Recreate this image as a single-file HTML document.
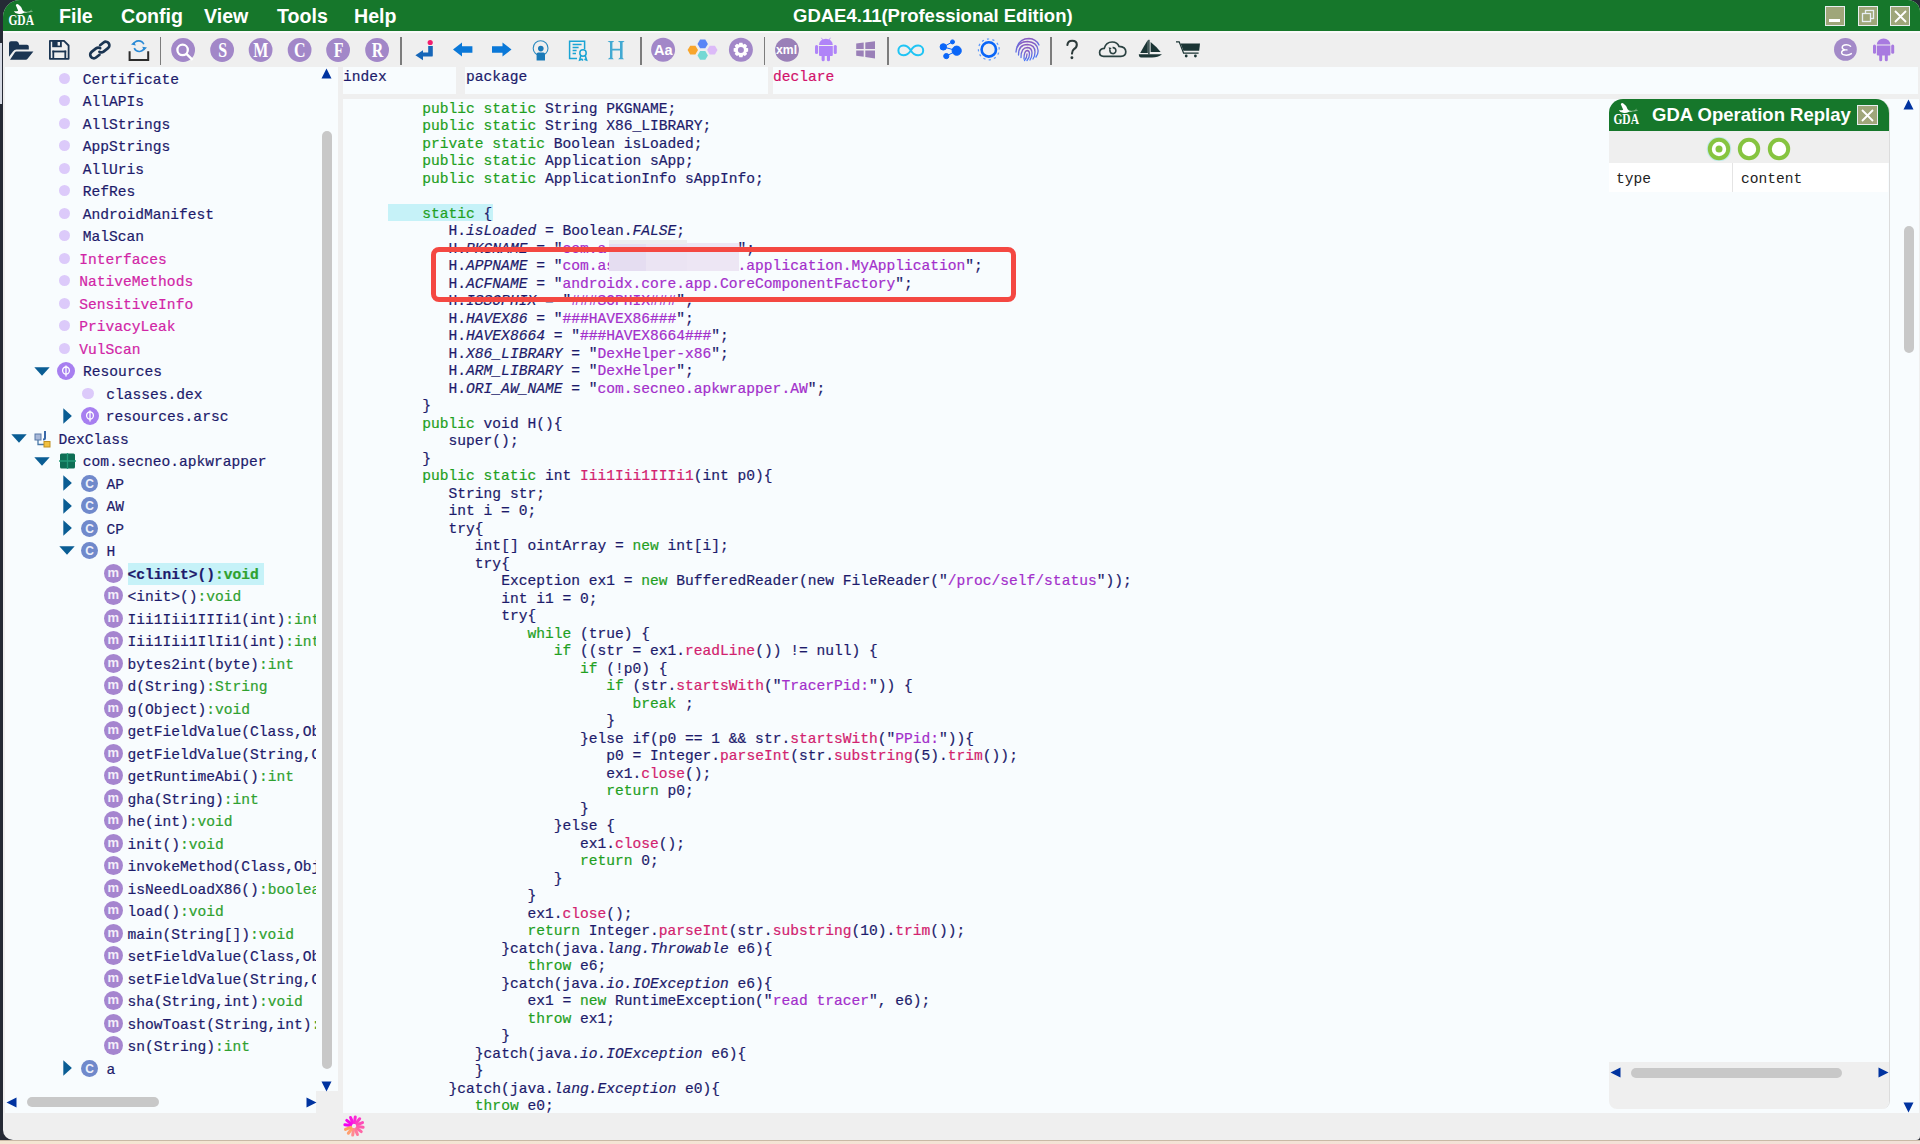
<!DOCTYPE html>
<html><head><meta charset="utf-8">
<style>
*{margin:0;padding:0;box-sizing:border-box}
html,body{width:1920px;height:1144px;overflow:hidden;background:#252a35}
body{position:relative;font-family:"Liberation Sans",sans-serif}
.abs{position:absolute}
.ic{position:absolute}
.circ{border-radius:50%;text-align:center;overflow:hidden}
.cl,.tl{position:absolute;white-space:pre;font-family:"Liberation Mono",monospace;font-size:14.6px;line-height:17.49px;color:#1d1b6b}
.tl{line-height:22.5px}
.cl,.tl{-webkit-text-stroke:0.2px currentColor}
.k{color:#1fa01f}.n{color:#1d1b6b}.m{color:#d2226e}.s{color:#a32fcb}.i{color:#1d1b6b;font-style:italic}
#win{position:absolute;left:3px;top:0;width:1917px;height:1140px;background:#efefef;border-radius:17px 12px 4px 10px;overflow:hidden}
#title{position:absolute;left:0;top:0;width:1917px;height:31px;background:#16772b}
.menu{position:absolute;top:0;height:31px;font:bold 18.5px/31px "Liberation Sans",sans-serif;color:#fff}
.m2{font-size:19.6px;line-height:31px;top:1.1px}
#wline{position:absolute;left:0;top:31px;width:1917px;height:2px;background:#fafafa}
.sep{position:absolute;top:36.5px;width:1.6px;height:28.3px;background:#7c7c7c}
.panel{position:absolute;background:#f8fcfe}
.tri{position:absolute}
.thumb{position:absolute;background:#c8c8c8;border-radius:6px}
</style></head><body>
<div id="win">
  <div id="title"></div>
  <div id="wline"></div>
</div>
<!-- left light strip -->
<div class="abs" style="left:0;top:43px;width:2px;height:61px;background:#d6dae4"></div>
<!-- bottom beige -->
<div class="abs" style="left:0;top:1140px;width:1920px;height:4px;background:linear-gradient(90deg,#f4e6d2,#f3e0d8);border-top:1px solid #c9b9a6"></div>

<!-- title bar contents -->
<svg class="abs" style="left:4px;top:0px" width="36" height="30" viewBox="0 0 36 30">
  <path d="M11.8 5.2 Q12.6 3.4 14.4 4.4 Q17.6 6.4 18.6 10.2 L20 11.6 L23.4 12.2 L19.6 13 Q17.4 14.4 14 13.8 Q11 13.2 9.8 11.2 Q12.6 11.6 14.2 10.8 Q13.2 8.4 11.8 5.2 Z" fill="#fff"/>
  <path d="M20 12.6 L28.6 11.4 M25.4 11.9 L27.6 10.2" stroke="#a8cca8" stroke-width="0.7" fill="none"/>
  <text x="4.4" y="24.6" font-family="Liberation Serif" font-weight="bold" font-size="14" fill="#fff" textLength="25.6" lengthAdjust="spacingAndGlyphs">GDA</text>
</svg>
<div class="menu m2" style="left:59px">File</div>
<div class="menu m2" style="left:121px">Config</div>
<div class="menu m2" style="left:204px">View</div>
<div class="menu m2" style="left:277px">Tools</div>
<div class="menu m2" style="left:354px">Help</div>
<div class="menu" style="left:793px">GDAE4.11(Professional Edition)</div>

<!-- window buttons -->
<div class="abs" style="left:1825px;top:6px;width:20px;height:20px;background:#9fa67a;border:1.5px solid #e8eef0"><div class="abs" style="left:3px;top:12px;width:11px;height:3px;background:#fff"></div></div>
<div class="abs" style="left:1858px;top:6px;width:20px;height:20px;background:#9fa67a;border:1.5px solid #e8eef0">
 <svg class="abs" style="left:1px;top:1px" width="16" height="16"><rect x="5.5" y="2.5" width="8" height="8" fill="none" stroke="#e8eef4" stroke-width="1.3"/><rect x="2.5" y="5.5" width="8" height="8" fill="#9fa67a" stroke="#e8eef4" stroke-width="1.3"/></svg></div>
<div class="abs" style="left:1890px;top:6px;width:20px;height:20px;background:#9fa67a;border:1.5px solid #e8eef0">
 <svg class="abs" style="left:1px;top:1px" width="16" height="16"><path d="M3 3L14 14M14 3L3 14" stroke="#fff" stroke-width="1.8"/></svg></div>

<!-- toolbar -->
<div class="sep" style="left:159.8px"></div>
<div class="sep" style="left:400px"></div>
<div class="sep" style="left:640px"></div>
<div class="sep" style="left:763.9px"></div>
<div class="sep" style="left:887.4px"></div>
<div class="sep" style="left:1050.3px"></div>
<svg class="abs" style="left:0;top:0" width="1920" height="70" viewBox="0 0 1920 70">
<defs>
 <linearGradient id="fpg" x1="0" y1="0" x2="0" y2="1"><stop offset="0" stop-color="#8a5cc0"/><stop offset="1" stop-color="#4a78f8"/></linearGradient>
</defs>
<!-- folder -->
<g fill="#1b3552">
 <path d="M9 43.2 Q9 41.2 11 41.2 H16.4 Q18 41.2 18.6 42.8 L19.2 44.8 H27 Q28.8 44.8 28.8 46.6 V49.6 H16.4 Q14.4 49.6 13 51.4 L9 56.8 Z"/>
 <path d="M16.4 51.4 H33.4 L27.8 58.6 Q27 59.8 25.6 59.8 H10 L14.8 52.6 Q15.4 51.4 16.4 51.4 Z"/>
</g>
<!-- save -->
<g>
 <path d="M49.9 40.9 H64 L68.6 45.5 V58.8 H49.9 Z" fill="none" stroke="#1b3552" stroke-width="1.8" stroke-linejoin="round"/>
 <rect x="52.2" y="41" width="9.6" height="6.2" fill="#1b3552"/>
 <rect x="57.6" y="42" width="2.4" height="3.6" fill="#efefef"/>
 <rect x="52.4" y="50.6" width="13.8" height="1.8" fill="#1b3552"/>
 <rect x="52.4" y="50.6" width="1.8" height="8" fill="#1b3552"/>
 <rect x="64.4" y="50.6" width="1.8" height="8" fill="#1b3552"/>
</g>
<!-- link -->
<g fill="none" stroke="#1b3552" stroke-width="2.7" stroke-linecap="round" transform="translate(99.8 50) rotate(-38)">
 <path d="M3.2 -3.6 L7.6 -3.6 A3.6 3.6 0 0 1 7.6 3.6 L2 3.6 A3.6 3.6 0 0 1 -1.4 1.2"/>
 <path d="M-3.2 3.6 L-7.6 3.6 A3.6 3.6 0 0 1 -7.6 -3.6 L-2 -3.6 A3.6 3.6 0 0 1 1.4 -1.2"/>
</g>
<!-- export -->
<path d="M129.6 51.2 V60 H148.2 V51.2" fill="none" stroke="#2b2b2b" stroke-width="2"/>
<g fill="none" stroke="#2a8ad6" stroke-width="1.6">
 <path d="M133.4 44.6 A5.6 5.6 0 0 1 143.8 44.2"/>
 <path d="M144.6 47.6 A5.6 5.6 0 0 1 134.2 48.2"/>
</g>
<path d="M131 44.6 L134.2 41.8 L135.8 45.4 Z M147 47.4 L144 50.4 L142.2 46.8 Z" fill="#2a8ad6"/>
<!-- purple circles -->
<g fill="#a287c8">
 <circle cx="183.1" cy="50" r="11.9"/><circle cx="222.1" cy="50" r="11.9"/><circle cx="260.6" cy="50" r="11.9"/>
 <circle cx="299.6" cy="50" r="11.9"/><circle cx="338.1" cy="50" r="11.9"/><circle cx="377.1" cy="50" r="11.9"/>
 <circle cx="663.1" cy="49.8" r="12"/><circle cx="740.9" cy="49.8" r="12"/>
 <circle cx="787" cy="49.9" r="11.9" fill="#9a80b8"/>
 <circle cx="1845.4" cy="49.4" r="11.4" fill="#a38ac8"/>
</g>
<circle cx="182.6" cy="49.9" r="5.2" fill="none" stroke="#fff" stroke-width="2.3"/>
<path d="M186.2 53.6 L192.6 59.8" stroke="#fff" stroke-width="2.4"/>
<g fill="#fff" font-family="Liberation Serif" font-weight="bold" font-size="16" text-anchor="middle" transform="translate(0 57.3) scale(1 1.33) translate(0 -57.3)">
 <text x="222.6" y="57.3">S</text><text x="260.8" y="57.3">M</text><text x="299.8" y="57.3">C</text>
 <text x="338.6" y="57.3">F</text><text x="377.5" y="57.3">R</text>
</g>
<!-- return arrow -->
<circle cx="430.2" cy="42.5" r="2.6" fill="#f21e6e"/>
<path d="M428.2 46 H432.8 V55.4 Q432.8 56.6 431.6 56.6 H423 V60.2 L415.4 55.2 L423 50.3 V52.6 H428.2 Z" fill="#1666b8"/>
<!-- left/right arrows -->
<path d="M453 49.5 L462 42.5 V46.2 H472.4 V52.8 H462 V56.5 Z" fill="#0a78d8"/>
<path d="M511.5 49.5 L502.5 42.5 V46.2 H492 V52.8 H502.5 V56.5 Z" fill="#0a78d8"/>
<!-- webcam -->
<circle cx="540.6" cy="48.2" r="7.4" fill="none" stroke="#2a8ac0" stroke-width="1.1"/>
<circle cx="540.8" cy="48.6" r="2.8" fill="#1a7ab8"/>
<path d="M536.6 54.2 Q536.6 52.6 538.2 52.6 H543.4 Q545 52.6 545 54.2 V60.6 H536.6 Z" fill="#1a7ab8"/>
<!-- certificate -->
<g fill="none" stroke="#1aa4d4" stroke-width="1.5">
 <path d="M584.6 49 V41.2 H569.6 V58.6 H577"/>
 <path d="M572.6 44.6 H581.6 M572.6 47.6 H578.6 M572.6 50.6 H576.6 M572.6 53.6 H576"/>
 <circle cx="583" cy="53" r="3.2"/>
 <path d="M580.8 55.6 L579.6 60 L581.8 59.2 L583 60.6 M585.2 55.6 L586.6 60 L584.4 59.2"/>
</g>
<path d="M607.6 40.9 H614.2 L613 42.2 H612.4 V48.8 H620 V42.2 H619.2 L618 40.9 H624.6 L623.2 42.2 H622.6 V57.8 L624 59.2 H618.2 L619.6 57.8 H620 V50.4 H612.4 V57.8 L613.8 59.2 H607.8 L609.4 57.8 H610 V42.2 H609.2 Z" fill="#42a9d2"/>
<!-- Aa -->
<text x="663.3" y="55.2" fill="#fff" font-family="Liberation Sans" font-weight="bold" font-size="14.5" text-anchor="middle">Aa</text>
<!-- hexagons -->
<g>
 <path d="M697.5 43.9 L700.1 39.5 H705.3 L707.9 43.9 L705.3 48.3 H700.1 Z" fill="#5a86f6"/>
 <path d="M687.6 50.1 L690.2 45.7 H695.4 L698 50.1 L695.4 54.5 H690.2 Z" fill="#f8a52c"/>
 <path d="M707.1 50.1 L709.7 45.7 H714.9 L717.5 50.1 L714.9 54.5 H709.7 Z" fill="#dcbaf8"/>
 <path d="M697.5 55.4 L700.1 51 H705.3 L707.9 55.4 L705.3 59.8 H700.1 Z" fill="#74d8d4"/>
</g>
<!-- gear -->
<path d="M738.66 44.88 L739.36 42.66 L742.44 42.66 L743.14 44.88 L742.87 44.77 L744.93 43.69 L747.11 45.87 L746.03 47.93 L745.92 47.66 L748.14 48.36 L748.14 51.44 L745.92 52.14 L746.03 51.87 L747.11 53.93 L744.93 56.11 L742.87 55.03 L743.14 54.92 L742.44 57.14 L739.36 57.14 L738.66 54.92 L738.93 55.03 L736.87 56.11 L734.69 53.93 L735.77 51.87 L735.88 52.14 L733.66 51.44 L733.66 48.36 L735.88 47.66 L735.77 47.93 L734.69 45.87 L736.87 43.69 L738.93 44.77 Z" fill="#fff"/><circle cx="740.9" cy="49.9" r="3" fill="#a287c8"/>
<!-- xml -->
<text x="786.6" y="53.6" fill="#fff" font-family="Liberation Sans" font-weight="bold" font-size="12.4" text-anchor="middle" textLength="21" lengthAdjust="spacingAndGlyphs">xml</text>
<!-- android -->
<g fill="#b084f8">
 <path d="M819 44.9 A6.9 6.1 0 0 1 832.8 44.9 Z"/>
 <path d="M819 45.9 H832.8 V54.9 Q832.8 55.9 831.8 55.9 H820 Q819 55.9 819 54.9 Z"/>
 <rect x="815" y="44.9" width="3.1" height="9.1" rx="1.5"/>
 <rect x="833.7" y="44.9" width="3.1" height="9.1" rx="1.5"/>
 <rect x="821.6" y="54" width="3.1" height="7.2" rx="1.5"/>
 <rect x="826.9" y="54" width="3.1" height="7.2" rx="1.5"/>
 <path d="M821.4 37.8 L822.8 40.2 M830.4 37.8 L829 40.2" stroke="#b084f8" stroke-width="0.8"/>
</g>
<!-- windows -->
<g fill="#9a80b8">
 <path d="M856.2 43.6 L863.7 42.6 V49 H856.2 Z"/>
 <path d="M865.3 42.4 L875 41.2 V49 H865.3 Z"/>
 <path d="M856.2 50.4 H863.7 V56.8 L856.2 55.8 Z"/>
 <path d="M865.3 50.4 H875 V58.4 L865.3 57 Z"/>
</g>
<!-- infinity -->
<path d="M910.8 50.5 C908 46 904.8 45.6 903.4 45.6 C900.2 45.6 898.4 48 898.4 50.5 C898.4 53 900.2 55.3 903.4 55.3 C904.8 55.3 908 55 910.8 50.5 C913.6 46 916.8 45.6 918.2 45.6 C921.4 45.6 923.2 48 923.2 50.5 C923.2 53 921.4 55.3 918.2 55.3 C916.8 55.3 913.6 55 910.8 50.5 Z" fill="none" stroke="#1fc4f4" stroke-width="2"/>
<!-- share -->
<g fill="#0a66f8" stroke="#0a66f8" stroke-width="1">
 <path d="M943.3 46.9 L956.7 50.7 M952.5 41.9 L943.3 46.9 M946.2 56.1 L956.7 50.7" fill="none"/>
 <circle cx="956.7" cy="50.7" r="4.6"/><circle cx="952.5" cy="41.9" r="2" /><circle cx="943.3" cy="46.9" r="3.2"/><circle cx="946.3" cy="56.1" r="2.6"/>
</g>
<!-- ring -->
<circle cx="988.8" cy="49.4" r="7.2" fill="none" stroke="#0a66f8" stroke-width="2.6"/>
<circle cx="988.8" cy="49.4" r="10.4" fill="none" stroke="#5a96fa" stroke-width="1.2" stroke-dasharray="2.2 3.25" transform="rotate(-12 988.8 49.4)"/>
<!-- fingerprint -->
<g fill="none" stroke="url(#fpg)" stroke-width="1.3" stroke-linecap="round">
 <path d="M1017 47 Q1020 38.5 1029 38.5 Q1036 38.8 1039 45"/>
 <path d="M1016 52 Q1016.5 42 1027.5 41.5 Q1037 42 1038 50 Q1038.5 54 1036 57"/>
 <path d="M1018.5 55 Q1018.5 44.5 1027.5 44.5 Q1035 45 1035 52 Q1035 56 1033 59"/>
 <path d="M1021 57.5 Q1021 47.5 1027.5 47.5 Q1032 48 1032 53 Q1032 57 1030 60"/>
 <path d="M1024 59 Q1024 50.5 1027.5 50.5 Q1029.5 51 1029.5 54 Q1029.5 58 1027 60.5"/>
 <path d="M1027 54 Q1027 58 1024.5 60.5"/>
</g>
<!-- ? -->
<path d="M1067.4 45 Q1067.8 40.8 1072.2 40.8 Q1076.8 40.8 1076.8 44.8 Q1076.8 47.4 1074 49.2 Q1072 50.6 1072 53.6" fill="none" stroke="#2c3a3a" stroke-width="2.1" stroke-linecap="round"/>
<circle cx="1071.9" cy="57.7" r="1.45" fill="#2c3a3a"/>
<!-- cloud -->
<path d="M1103.6 56.4 Q1099.6 56.4 1099.6 52.6 Q1099.6 48.6 1104.2 48.4 Q1106 42 1112.2 42 Q1117.4 42 1119 46.4 Q1125.8 46.8 1125.8 51.8 Q1125.8 56.4 1120.8 56.4 Z" fill="none" stroke="#2b4242" stroke-width="1.7"/>
<path d="M1110 49.8 A3 3 0 1 0 1112.6 47.6" fill="none" stroke="#2b4242" stroke-width="1.6"/>
<path d="M1108.6 47.2 L1111.6 48 L1109.6 50.6 Z" fill="#2b4242"/>
<!-- sailboat -->
<g fill="#1b3535">
 <path d="M1147.8 40 V53 H1140.2 Q1144 46 1147.8 40 Z"/>
 <path d="M1150.6 42 Q1157 47 1160.6 52 H1150.6 Z"/>
 <path d="M1138.8 54.2 H1162 Q1158 57.4 1152 57.4 H1141 Q1139 57.4 1138.8 54.2 Z"/>
 <rect x="1148.2" y="39.8" width="1.4" height="14.6"/>
</g>
<!-- cart -->
<g fill="#1b3535">
 <path d="M1176 41.2 H1179.6 L1184 52.6 H1198.6 V53.8 H1183.2 L1178.8 42.4 H1176 Z"/>
 <path d="M1180.6 43.6 H1200 L1199.2 50.8 H1183.4 Z"/>
 <circle cx="1186.2" cy="56" r="1.4"/><circle cx="1195.4" cy="56" r="1.4"/>
</g>
<!-- epsilon -->
<path d="M1850.6 46.2 Q1848.8 44.8 1846.4 44.8 Q1842.2 44.8 1842.2 47.6 Q1842.2 49.6 1845.2 49.9 H1847 M1845.2 49.9 Q1841.6 50.2 1841.6 52.6 Q1841.6 55.2 1846.4 55.2 Q1849.4 55.2 1851.4 53.6" fill="none" stroke="#fff" stroke-width="1.4" stroke-linecap="round"/>
<!-- android right -->
<g fill="#a87ae0">
 <path d="M1876.8 44.6 A6.8 6 0 0 1 1890.4 44.6 Z"/>
 <path d="M1876.8 45.6 H1890.4 V54.6 Q1890.4 55.6 1889.4 55.6 H1877.8 Q1876.8 55.6 1876.8 54.6 Z"/>
 <rect x="1873" y="44.6" width="3" height="9.2" rx="1.5"/>
 <rect x="1891.2" y="44.6" width="3" height="9.2" rx="1.5"/>
 <rect x="1879.2" y="54" width="3" height="7.2" rx="1.5"/>
 <rect x="1884.8" y="54" width="3" height="7.2" rx="1.5"/>
</g>
</svg>


<!-- left panel -->
<div class="panel" style="left:5px;top:67px;width:333px;height:1046px"></div>
<div class="abs" style="left:316px;top:1091px;width:22px;height:22px;background:#efefef"></div>
<svg class="abs" style="left:321px;top:68px" width="11" height="11"><path d="M5.5 0.5L10.5 10.5H0.5Z" fill="#0033a0"/></svg>
<svg class="abs" style="left:321px;top:1081px" width="11" height="11"><path d="M5.5 10.5L10.5 0.5H0.5Z" fill="#0033a0"/></svg>
<div class="thumb" style="left:322px;top:131px;width:10px;height:938px"></div>
<svg class="abs" style="left:6px;top:1097px" width="11" height="11"><path d="M0.5 5.5L10.5 0.5V10.5Z" fill="#0033a0"/></svg>
<svg class="abs" style="left:306px;top:1097px" width="11" height="11"><path d="M10.5 5.5L0.5 0.5V10.5Z" fill="#0033a0"/></svg>
<div class="thumb" style="left:27px;top:1097px;width:132px;height:10px"></div>
<!-- tree highlight -->
<div class="abs" style="left:127.5px;top:563px;width:136.3px;height:21.6px;background:#c6f2f8"></div>
<div style="position:absolute;left:0;top:67px;width:316px;height:1024px;overflow:hidden"><div style="position:absolute;left:0;top:-67px"><div class="ic circ" style="left:58.8px;top:72.6px;width:11.3px;height:11.3px;background:#dccafa;font:bold 12px/11.3px 'Liberation Sans',sans-serif;color:#fff"><span style="position:relative;top:0px"></span></div>
<div class="tl" style="top:68.66px;left:82.70px"><span style="color:#1d1b6b">Certificate</span></div>
<div class="ic circ" style="left:58.8px;top:95.1px;width:11.3px;height:11.3px;background:#dccafa;font:bold 12px/11.3px 'Liberation Sans',sans-serif;color:#fff"><span style="position:relative;top:0px"></span></div>
<div class="tl" style="top:91.16px;left:82.70px"><span style="color:#1d1b6b">AllAPIs</span></div>
<div class="ic circ" style="left:58.8px;top:117.7px;width:11.3px;height:11.3px;background:#dccafa;font:bold 12px/11.3px 'Liberation Sans',sans-serif;color:#fff"><span style="position:relative;top:0px"></span></div>
<div class="tl" style="top:113.66px;left:82.70px"><span style="color:#1d1b6b">AllStrings</span></div>
<div class="ic circ" style="left:58.8px;top:140.2px;width:11.3px;height:11.3px;background:#dccafa;font:bold 12px/11.3px 'Liberation Sans',sans-serif;color:#fff"><span style="position:relative;top:0px"></span></div>
<div class="tl" style="top:136.16px;left:82.70px"><span style="color:#1d1b6b">AppStrings</span></div>
<div class="ic circ" style="left:58.8px;top:162.7px;width:11.3px;height:11.3px;background:#dccafa;font:bold 12px/11.3px 'Liberation Sans',sans-serif;color:#fff"><span style="position:relative;top:0px"></span></div>
<div class="tl" style="top:158.66px;left:82.70px"><span style="color:#1d1b6b">AllUris</span></div>
<div class="ic circ" style="left:58.8px;top:185.2px;width:11.3px;height:11.3px;background:#dccafa;font:bold 12px/11.3px 'Liberation Sans',sans-serif;color:#fff"><span style="position:relative;top:0px"></span></div>
<div class="tl" style="top:181.16px;left:82.70px"><span style="color:#1d1b6b">RefRes</span></div>
<div class="ic circ" style="left:58.8px;top:207.7px;width:11.3px;height:11.3px;background:#dccafa;font:bold 12px/11.3px 'Liberation Sans',sans-serif;color:#fff"><span style="position:relative;top:0px"></span></div>
<div class="tl" style="top:203.66px;left:82.70px"><span style="color:#1d1b6b">AndroidManifest</span></div>
<div class="ic circ" style="left:58.8px;top:230.2px;width:11.3px;height:11.3px;background:#dccafa;font:bold 12px/11.3px 'Liberation Sans',sans-serif;color:#fff"><span style="position:relative;top:0px"></span></div>
<div class="tl" style="top:226.16px;left:82.70px"><span style="color:#1d1b6b">MalScan</span></div>
<div class="ic circ" style="left:58.8px;top:252.7px;width:11.3px;height:11.3px;background:#dccafa;font:bold 12px/11.3px 'Liberation Sans',sans-serif;color:#fff"><span style="position:relative;top:0px"></span></div>
<div class="tl" style="top:248.66px;left:79.30px"><span style="color:#d125a6">Interfaces</span></div>
<div class="ic circ" style="left:58.8px;top:275.2px;width:11.3px;height:11.3px;background:#dccafa;font:bold 12px/11.3px 'Liberation Sans',sans-serif;color:#fff"><span style="position:relative;top:0px"></span></div>
<div class="tl" style="top:271.16px;left:79.30px"><span style="color:#d125a6">NativeMethods</span></div>
<div class="ic circ" style="left:58.8px;top:297.7px;width:11.3px;height:11.3px;background:#dccafa;font:bold 12px/11.3px 'Liberation Sans',sans-serif;color:#fff"><span style="position:relative;top:0px"></span></div>
<div class="tl" style="top:293.66px;left:79.30px"><span style="color:#d125a6">SensitiveInfo</span></div>
<div class="ic circ" style="left:58.8px;top:320.2px;width:11.3px;height:11.3px;background:#dccafa;font:bold 12px/11.3px 'Liberation Sans',sans-serif;color:#fff"><span style="position:relative;top:0px"></span></div>
<div class="tl" style="top:316.16px;left:79.30px"><span style="color:#d125a6">PrivacyLeak</span></div>
<div class="ic circ" style="left:58.8px;top:342.7px;width:11.3px;height:11.3px;background:#dccafa;font:bold 12px/11.3px 'Liberation Sans',sans-serif;color:#fff"><span style="position:relative;top:0px"></span></div>
<div class="tl" style="top:338.66px;left:79.30px"><span style="color:#d125a6">VulScan</span></div>
<svg class="ic" style="left:34.4px;top:366.8px" width="16" height="9"><path d="M0.3 0.3H15.7L8 8.7Z" fill="#0a5d94"/></svg>
<svg class="ic" style="left:57.3px;top:361.8px" width="18" height="18" viewBox="0 0 18 18"><circle cx="9" cy="9" r="9" fill="#a77ff0"/><ellipse cx="9" cy="8.6" rx="3.4" ry="3.6" fill="none" stroke="#fff" stroke-width="1.3"/><path d="M9 3.6V14.4" stroke="#fff" stroke-width="1.3"/></svg>
<div class="tl" style="top:361.16px;left:83.10px"><span style="color:#1d1b6b">Resources</span></div>
<div class="ic circ" style="left:82.3px;top:387.7px;width:11.3px;height:11.3px;background:#dccafa;font:bold 12px/11.3px 'Liberation Sans',sans-serif;color:#fff"><span style="position:relative;top:0px"></span></div>
<div class="tl" style="top:383.66px;left:106.30px"><span style="color:#1d1b6b">classes.dex</span></div>
<svg class="ic" style="left:62.8px;top:407.8px" width="9" height="16"><path d="M0.3 0.3V15.7L8.9 8Z" fill="#0a5d94"/></svg>
<svg class="ic" style="left:81.0px;top:407.3px" width="18" height="18" viewBox="0 0 18 18"><circle cx="9" cy="9" r="9" fill="#a77ff0"/><ellipse cx="9" cy="8.6" rx="3.4" ry="3.6" fill="none" stroke="#fff" stroke-width="1.3"/><path d="M9 3.6V14.4" stroke="#fff" stroke-width="1.3"/></svg>
<div class="tl" style="top:406.16px;left:105.80px"><span style="color:#1d1b6b">resources.arsc</span></div>
<svg class="ic" style="left:10.5px;top:433.8px" width="16" height="9"><path d="M0.3 0.3H15.7L8 8.7Z" fill="#0a5d94"/></svg>
<svg class="ic" style="left:34px;top:429.8px" width="17" height="18" viewBox="0 0 17 18"><rect x="1" y="4" width="6" height="6" fill="#a8b8d8" stroke="#5878a8" stroke-width="1"/><path d="M4 10V14.5H10" stroke="#4878a8" stroke-width="1.3" fill="none"/><path d="M11 1V8Q11 9.5 9 9.5" stroke="#3868a8" stroke-width="2" fill="none"/><rect x="10" y="11.5" width="6" height="5.5" fill="#f0c040" stroke="#c09020" stroke-width="1"/></svg>
<div class="tl" style="top:428.66px;left:58.60px"><span style="color:#1d1b6b">DexClass</span></div>
<svg class="ic" style="left:34.4px;top:457.3px" width="16" height="9"><path d="M0.3 0.3H15.7L8 8.7Z" fill="#0a5d94"/></svg>
<svg class="ic" style="left:58.5px;top:452.8px" width="17" height="16" viewBox="0 0 17 16"><rect x="1" y="0.5" width="15" height="15" rx="1.5" fill="#0e6e55"/><path d="M8.5 0V16M0 8H17" stroke="#239a78" stroke-width="1.3"/></svg>
<div class="tl" style="top:451.16px;left:82.70px"><span style="color:#1d1b6b">com.secneo.apkwrapper</span></div>
<svg class="ic" style="left:63.0px;top:475.3px" width="9" height="16"><path d="M0.3 0.3V15.7L8.9 8Z" fill="#0a5d94"/></svg>
<div class="ic circ" style="left:81.2px;top:474.9px;width:16.8px;height:16.8px;background:#7089cb;font:bold 12px/16.8px 'Liberation Sans',sans-serif;color:#eef0fa"><span style="position:relative;top:0.7px">C</span></div>
<div class="tl" style="top:473.66px;left:106.60px"><span style="color:#1d1b6b">AP</span></div>
<svg class="ic" style="left:63.0px;top:497.8px" width="9" height="16"><path d="M0.3 0.3V15.7L8.9 8Z" fill="#0a5d94"/></svg>
<div class="ic circ" style="left:81.2px;top:497.4px;width:16.8px;height:16.8px;background:#7089cb;font:bold 12px/16.8px 'Liberation Sans',sans-serif;color:#eef0fa"><span style="position:relative;top:0.7px">C</span></div>
<div class="tl" style="top:496.16px;left:106.60px"><span style="color:#1d1b6b">AW</span></div>
<svg class="ic" style="left:63.0px;top:520.3px" width="9" height="16"><path d="M0.3 0.3V15.7L8.9 8Z" fill="#0a5d94"/></svg>
<div class="ic circ" style="left:81.2px;top:519.9px;width:16.8px;height:16.8px;background:#7089cb;font:bold 12px/16.8px 'Liberation Sans',sans-serif;color:#eef0fa"><span style="position:relative;top:0.7px">C</span></div>
<div class="tl" style="top:518.66px;left:106.60px"><span style="color:#1d1b6b">CP</span></div>
<svg class="ic" style="left:58.5px;top:546.3px" width="16" height="9"><path d="M0.3 0.3H15.7L8 8.7Z" fill="#0a5d94"/></svg>
<div class="ic circ" style="left:81.2px;top:542.4px;width:16.8px;height:16.8px;background:#7089cb;font:bold 12px/16.8px 'Liberation Sans',sans-serif;color:#eef0fa"><span style="position:relative;top:0.7px">C</span></div>
<div class="tl" style="top:541.16px;left:106.60px"><span style="color:#1d1b6b">H</span></div>
<div class="ic circ" style="left:103.7px;top:563.8px;width:19px;height:19px;background:#a585cf;font:bold 13px/19px 'Liberation Sans',sans-serif;color:#f4eefa"><span style="position:relative;top:-1.1px">m</span></div>
<div class="tl" style="top:563.66px;left:127.50px;font-weight:bold"><span style="color:#1d1b6b">&lt;clinit&gt;()</span><span style="color:#2fa12f">:void</span></div>
<div class="ic circ" style="left:103.7px;top:586.3px;width:19px;height:19px;background:#a585cf;font:bold 13px/19px 'Liberation Sans',sans-serif;color:#f4eefa"><span style="position:relative;top:-1.1px">m</span></div>
<div class="tl" style="top:586.16px;left:127.50px"><span style="color:#1d1b6b">&lt;init&gt;()</span><span style="color:#2fa12f">:void</span></div>
<div class="ic circ" style="left:103.7px;top:608.8px;width:19px;height:19px;background:#a585cf;font:bold 13px/19px 'Liberation Sans',sans-serif;color:#f4eefa"><span style="position:relative;top:-1.1px">m</span></div>
<div class="tl" style="top:608.66px;left:127.50px"><span style="color:#1d1b6b">Iii1Iii1IIIi1(int)</span><span style="color:#2fa12f">:int</span></div>
<div class="ic circ" style="left:103.7px;top:631.3px;width:19px;height:19px;background:#a585cf;font:bold 13px/19px 'Liberation Sans',sans-serif;color:#f4eefa"><span style="position:relative;top:-1.1px">m</span></div>
<div class="tl" style="top:631.16px;left:127.50px"><span style="color:#1d1b6b">Iii1Iii1IlIi1(int)</span><span style="color:#2fa12f">:int</span></div>
<div class="ic circ" style="left:103.7px;top:653.8px;width:19px;height:19px;background:#a585cf;font:bold 13px/19px 'Liberation Sans',sans-serif;color:#f4eefa"><span style="position:relative;top:-1.1px">m</span></div>
<div class="tl" style="top:653.66px;left:127.50px"><span style="color:#1d1b6b">bytes2int(byte)</span><span style="color:#2fa12f">:int</span></div>
<div class="ic circ" style="left:103.7px;top:676.3px;width:19px;height:19px;background:#a585cf;font:bold 13px/19px 'Liberation Sans',sans-serif;color:#f4eefa"><span style="position:relative;top:-1.1px">m</span></div>
<div class="tl" style="top:676.16px;left:127.50px"><span style="color:#1d1b6b">d(String)</span><span style="color:#2fa12f">:String</span></div>
<div class="ic circ" style="left:103.7px;top:698.8px;width:19px;height:19px;background:#a585cf;font:bold 13px/19px 'Liberation Sans',sans-serif;color:#f4eefa"><span style="position:relative;top:-1.1px">m</span></div>
<div class="tl" style="top:698.66px;left:127.50px"><span style="color:#1d1b6b">g(Object)</span><span style="color:#2fa12f">:void</span></div>
<div class="ic circ" style="left:103.7px;top:721.3px;width:19px;height:19px;background:#a585cf;font:bold 13px/19px 'Liberation Sans',sans-serif;color:#f4eefa"><span style="position:relative;top:-1.1px">m</span></div>
<div class="tl" style="top:721.16px;left:127.50px"><span style="color:#1d1b6b">getFieldValue(Class,Object)</span><span style="color:#2fa12f">:Object</span></div>
<div class="ic circ" style="left:103.7px;top:743.8px;width:19px;height:19px;background:#a585cf;font:bold 13px/19px 'Liberation Sans',sans-serif;color:#f4eefa"><span style="position:relative;top:-1.1px">m</span></div>
<div class="tl" style="top:743.66px;left:127.50px"><span style="color:#1d1b6b">getFieldValue(String,Object)</span><span style="color:#2fa12f">:Object</span></div>
<div class="ic circ" style="left:103.7px;top:766.3px;width:19px;height:19px;background:#a585cf;font:bold 13px/19px 'Liberation Sans',sans-serif;color:#f4eefa"><span style="position:relative;top:-1.1px">m</span></div>
<div class="tl" style="top:766.16px;left:127.50px"><span style="color:#1d1b6b">getRuntimeAbi()</span><span style="color:#2fa12f">:int</span></div>
<div class="ic circ" style="left:103.7px;top:788.8px;width:19px;height:19px;background:#a585cf;font:bold 13px/19px 'Liberation Sans',sans-serif;color:#f4eefa"><span style="position:relative;top:-1.1px">m</span></div>
<div class="tl" style="top:788.66px;left:127.50px"><span style="color:#1d1b6b">gha(String)</span><span style="color:#2fa12f">:int</span></div>
<div class="ic circ" style="left:103.7px;top:811.3px;width:19px;height:19px;background:#a585cf;font:bold 13px/19px 'Liberation Sans',sans-serif;color:#f4eefa"><span style="position:relative;top:-1.1px">m</span></div>
<div class="tl" style="top:811.16px;left:127.50px"><span style="color:#1d1b6b">he(int)</span><span style="color:#2fa12f">:void</span></div>
<div class="ic circ" style="left:103.7px;top:833.8px;width:19px;height:19px;background:#a585cf;font:bold 13px/19px 'Liberation Sans',sans-serif;color:#f4eefa"><span style="position:relative;top:-1.1px">m</span></div>
<div class="tl" style="top:833.66px;left:127.50px"><span style="color:#1d1b6b">init()</span><span style="color:#2fa12f">:void</span></div>
<div class="ic circ" style="left:103.7px;top:856.3px;width:19px;height:19px;background:#a585cf;font:bold 13px/19px 'Liberation Sans',sans-serif;color:#f4eefa"><span style="position:relative;top:-1.1px">m</span></div>
<div class="tl" style="top:856.16px;left:127.50px"><span style="color:#1d1b6b">invokeMethod(Class,Object)</span><span style="color:#2fa12f">:Object</span></div>
<div class="ic circ" style="left:103.7px;top:878.8px;width:19px;height:19px;background:#a585cf;font:bold 13px/19px 'Liberation Sans',sans-serif;color:#f4eefa"><span style="position:relative;top:-1.1px">m</span></div>
<div class="tl" style="top:878.66px;left:127.50px"><span style="color:#1d1b6b">isNeedLoadX86()</span><span style="color:#2fa12f">:boolean</span></div>
<div class="ic circ" style="left:103.7px;top:901.3px;width:19px;height:19px;background:#a585cf;font:bold 13px/19px 'Liberation Sans',sans-serif;color:#f4eefa"><span style="position:relative;top:-1.1px">m</span></div>
<div class="tl" style="top:901.16px;left:127.50px"><span style="color:#1d1b6b">load()</span><span style="color:#2fa12f">:void</span></div>
<div class="ic circ" style="left:103.7px;top:923.8px;width:19px;height:19px;background:#a585cf;font:bold 13px/19px 'Liberation Sans',sans-serif;color:#f4eefa"><span style="position:relative;top:-1.1px">m</span></div>
<div class="tl" style="top:923.66px;left:127.50px"><span style="color:#1d1b6b">main(String[])</span><span style="color:#2fa12f">:void</span></div>
<div class="ic circ" style="left:103.7px;top:946.3px;width:19px;height:19px;background:#a585cf;font:bold 13px/19px 'Liberation Sans',sans-serif;color:#f4eefa"><span style="position:relative;top:-1.1px">m</span></div>
<div class="tl" style="top:946.16px;left:127.50px"><span style="color:#1d1b6b">setFieldValue(Class,Object)</span><span style="color:#2fa12f">:void</span></div>
<div class="ic circ" style="left:103.7px;top:968.8px;width:19px;height:19px;background:#a585cf;font:bold 13px/19px 'Liberation Sans',sans-serif;color:#f4eefa"><span style="position:relative;top:-1.1px">m</span></div>
<div class="tl" style="top:968.66px;left:127.50px"><span style="color:#1d1b6b">setFieldValue(String,Object)</span><span style="color:#2fa12f">:void</span></div>
<div class="ic circ" style="left:103.7px;top:991.3px;width:19px;height:19px;background:#a585cf;font:bold 13px/19px 'Liberation Sans',sans-serif;color:#f4eefa"><span style="position:relative;top:-1.1px">m</span></div>
<div class="tl" style="top:991.16px;left:127.50px"><span style="color:#1d1b6b">sha(String,int)</span><span style="color:#2fa12f">:void</span></div>
<div class="ic circ" style="left:103.7px;top:1013.8px;width:19px;height:19px;background:#a585cf;font:bold 13px/19px 'Liberation Sans',sans-serif;color:#f4eefa"><span style="position:relative;top:-1.1px">m</span></div>
<div class="tl" style="top:1013.66px;left:127.50px"><span style="color:#1d1b6b">showToast(String,int)</span><span style="color:#2fa12f">:void</span></div>
<div class="ic circ" style="left:103.7px;top:1036.3px;width:19px;height:19px;background:#a585cf;font:bold 13px/19px 'Liberation Sans',sans-serif;color:#f4eefa"><span style="position:relative;top:-1.1px">m</span></div>
<div class="tl" style="top:1036.16px;left:127.50px"><span style="color:#1d1b6b">sn(String)</span><span style="color:#2fa12f">:int</span></div>
<svg class="ic" style="left:63.0px;top:1060.3px" width="9" height="16"><path d="M0.3 0.3V15.7L8.9 8Z" fill="#0a5d94"/></svg>
<div class="ic circ" style="left:81.2px;top:1059.9px;width:16.8px;height:16.8px;background:#7089cb;font:bold 12px/16.8px 'Liberation Sans',sans-serif;color:#eef0fa"><span style="position:relative;top:0.7px">C</span></div>
<div class="tl" style="top:1058.66px;left:106.60px"><span style="color:#1d1b6b">a</span></div></div></div>

<!-- header row -->
<div class="panel" style="left:342.5px;top:67.4px;width:113.5px;height:26.5px"></div>
<div class="panel" style="left:465px;top:67.4px;width:303px;height:26.5px"></div>
<div class="panel" style="left:772.7px;top:67.4px;width:1145.3px;height:26.5px"></div>
<div class="tl" style="left:343px;top:66.2px">index</div>
<div class="tl" style="left:466px;top:66.2px">package</div>
<div class="tl" style="left:773px;top:66.2px;color:#d2136b">declare</div>

<!-- code panel -->
<div class="panel" style="left:342.5px;top:98.7px;width:1576.5px;height:1014px"></div>
<div class="abs" style="left:387.5px;top:204px;width:105px;height:17px;background:#c6f2f8"></div>
<div class="cl" style="top:100.86px;left:422.30px"><span class="k">public static </span><span class="n">String PKGNAME;</span></div>
<div class="cl" style="top:118.36px;left:422.30px"><span class="k">public static </span><span class="n">String X86_LIBRARY;</span></div>
<div class="cl" style="top:135.86px;left:422.30px"><span class="k">private static </span><span class="n">Boolean isLoaded;</span></div>
<div class="cl" style="top:153.36px;left:422.30px"><span class="k">public static </span><span class="n">Application sApp;</span></div>
<div class="cl" style="top:170.86px;left:422.30px"><span class="k">public static </span><span class="n">ApplicationInfo sAppInfo;</span></div>
<div class="cl" style="top:205.86px;left:422.30px"><span class="k">static </span><span class="n">{</span></div>
<div class="cl" style="top:223.36px;left:448.58px"><span class="n">H.</span><span class="i">isLoaded</span><span class="n"> = Boolean.</span><span class="i">FALSE</span><span class="n">;</span></div>
<div class="cl" style="top:240.86px;left:448.58px"><span class="n">H.</span><span class="i">PKGNAME</span><span class="n"> = "</span><span class="s">com.a</span><span class="n">               </span><span class="n">";</span></div>
<div class="cl" style="top:258.36px;left:448.58px"><span class="n">H.</span><span class="i">APPNAME</span><span class="n"> = "</span><span class="s">com.as              .application.MyApplication</span><span class="n">";</span></div>
<div class="cl" style="top:275.86px;left:448.58px"><span class="n">H.</span><span class="i">ACFNAME</span><span class="n"> = "</span><span class="s">androidx.core.app.CoreComponentFactory</span><span class="n">";</span></div>
<div class="cl" style="top:293.36px;left:448.58px"><span class="n">H.</span><span class="i">ISSOPHIX</span><span class="n"> = "</span><span class="s">###SOPHIX###</span><span class="n">";</span></div>
<div class="cl" style="top:310.86px;left:448.58px"><span class="n">H.</span><span class="i">HAVEX86</span><span class="n"> = "</span><span class="s">###HAVEX86###</span><span class="n">";</span></div>
<div class="cl" style="top:328.36px;left:448.58px"><span class="n">H.</span><span class="i">HAVEX8664</span><span class="n"> = "</span><span class="s">###HAVEX8664###</span><span class="n">";</span></div>
<div class="cl" style="top:345.86px;left:448.58px"><span class="n">H.</span><span class="i">X86_LIBRARY</span><span class="n"> = "</span><span class="s">DexHelper-x86</span><span class="n">";</span></div>
<div class="cl" style="top:363.36px;left:448.58px"><span class="n">H.</span><span class="i">ARM_LIBRARY</span><span class="n"> = "</span><span class="s">DexHelper</span><span class="n">";</span></div>
<div class="cl" style="top:380.86px;left:448.58px"><span class="n">H.</span><span class="i">ORI_AW_NAME</span><span class="n"> = "</span><span class="s">com.secneo.apkwrapper.AW</span><span class="n">";</span></div>
<div class="cl" style="top:398.36px;left:422.30px"><span class="n">}</span></div>
<div class="cl" style="top:415.86px;left:422.30px"><span class="k">public </span><span class="n">void H(){</span></div>
<div class="cl" style="top:433.36px;left:448.58px"><span class="n">super();</span></div>
<div class="cl" style="top:450.86px;left:422.30px"><span class="n">}</span></div>
<div class="cl" style="top:468.36px;left:422.30px"><span class="k">public static </span><span class="n">int </span><span class="m">Iii1Iii1IIIi1</span><span class="n">(int p0){</span></div>
<div class="cl" style="top:485.86px;left:448.58px"><span class="n">String str;</span></div>
<div class="cl" style="top:503.36px;left:448.58px"><span class="n">int i = 0;</span></div>
<div class="cl" style="top:520.86px;left:448.58px"><span class="n">try{</span></div>
<div class="cl" style="top:538.36px;left:474.86px"><span class="n">int[] ointArray = </span><span class="k">new</span><span class="n"> int[i];</span></div>
<div class="cl" style="top:555.86px;left:474.86px"><span class="n">try{</span></div>
<div class="cl" style="top:573.36px;left:501.14px"><span class="n">Exception ex1 = </span><span class="k">new</span><span class="n"> BufferedReader(new FileReader("</span><span class="s">/proc/self/status</span><span class="n">"));</span></div>
<div class="cl" style="top:590.86px;left:501.14px"><span class="n">int i1 = 0;</span></div>
<div class="cl" style="top:608.36px;left:501.14px"><span class="n">try{</span></div>
<div class="cl" style="top:625.86px;left:527.42px"><span class="k">while</span><span class="n"> (true) {</span></div>
<div class="cl" style="top:643.36px;left:553.70px"><span class="k">if</span><span class="n"> ((str = ex1.</span><span class="m">readLine</span><span class="n">()) != null) {</span></div>
<div class="cl" style="top:660.86px;left:579.98px"><span class="k">if</span><span class="n"> (!p0) {</span></div>
<div class="cl" style="top:678.36px;left:606.26px"><span class="k">if</span><span class="n"> (str.</span><span class="m">startsWith</span><span class="n">("</span><span class="s">TracerPid:</span><span class="n">")) {</span></div>
<div class="cl" style="top:695.86px;left:632.54px"><span class="k">break</span><span class="n"> ;</span></div>
<div class="cl" style="top:713.36px;left:606.26px"><span class="n">}</span></div>
<div class="cl" style="top:730.86px;left:579.98px"><span class="n">}else if(p0 == 1 &amp;&amp; str.</span><span class="m">startsWith</span><span class="n">("</span><span class="s">PPid:</span><span class="n">")){</span></div>
<div class="cl" style="top:748.36px;left:606.26px"><span class="n">p0 = Integer.</span><span class="m">parseInt</span><span class="n">(str.</span><span class="m">substring</span><span class="n">(5).</span><span class="m">trim</span><span class="n">());</span></div>
<div class="cl" style="top:765.86px;left:606.26px"><span class="n">ex1.</span><span class="m">close</span><span class="n">();</span></div>
<div class="cl" style="top:783.36px;left:606.26px"><span class="k">return</span><span class="n"> p0;</span></div>
<div class="cl" style="top:800.86px;left:579.98px"><span class="n">}</span></div>
<div class="cl" style="top:818.36px;left:553.70px"><span class="n">}else {</span></div>
<div class="cl" style="top:835.86px;left:579.98px"><span class="n">ex1.</span><span class="m">close</span><span class="n">();</span></div>
<div class="cl" style="top:853.36px;left:579.98px"><span class="k">return</span><span class="n"> 0;</span></div>
<div class="cl" style="top:870.86px;left:553.70px"><span class="n">}</span></div>
<div class="cl" style="top:888.36px;left:527.42px"><span class="n">}</span></div>
<div class="cl" style="top:905.86px;left:527.42px"><span class="n">ex1.</span><span class="m">close</span><span class="n">();</span></div>
<div class="cl" style="top:923.36px;left:527.42px"><span class="k">return</span><span class="n"> Integer.</span><span class="m">parseInt</span><span class="n">(str.</span><span class="m">substring</span><span class="n">(10).</span><span class="m">trim</span><span class="n">());</span></div>
<div class="cl" style="top:940.86px;left:501.14px"><span class="n">}catch(java.</span><span class="i">lang.Throwable</span><span class="n"> e6){</span></div>
<div class="cl" style="top:958.36px;left:527.42px"><span class="k">throw</span><span class="n"> e6;</span></div>
<div class="cl" style="top:975.86px;left:501.14px"><span class="n">}catch(java.</span><span class="i">io.IOException</span><span class="n"> e6){</span></div>
<div class="cl" style="top:993.36px;left:527.42px"><span class="n">ex1 = </span><span class="k">new</span><span class="n"> RuntimeException("</span><span class="s">read tracer</span><span class="n">", e6);</span></div>
<div class="cl" style="top:1010.86px;left:527.42px"><span class="k">throw</span><span class="n"> ex1;</span></div>
<div class="cl" style="top:1028.36px;left:501.14px"><span class="n">}</span></div>
<div class="cl" style="top:1045.86px;left:474.86px"><span class="n">}catch(java.</span><span class="i">io.IOException</span><span class="n"> e6){</span></div>
<div class="cl" style="top:1063.36px;left:474.86px"><span class="n">}</span></div>
<div class="cl" style="top:1080.86px;left:448.58px"><span class="n">}catch(java.</span><span class="i">lang.Exception</span><span class="n"> e0){</span></div>
<div class="cl" style="top:1098.36px;left:474.86px"><span class="k">throw</span><span class="n"> e0;</span></div>
<!-- blur box -->
<div class="abs" style="left:609px;top:240px;width:78px;height:4px;background:#ecedf0"></div><div class="abs" style="left:609px;top:244px;width:37px;height:26.5px;background:#e5ddf1"></div><div class="abs" style="left:646px;top:244px;width:41px;height:26.5px;background:#ebe4f3"></div><div class="abs" style="left:687px;top:243px;width:52px;height:27.5px;background:#ede6f4"></div>
<!-- red box -->
<div class="abs" style="left:431.3px;top:247.3px;width:585px;height:55px;border:5px solid #f44842;border-radius:8px"></div>

<!-- code v scrollbar -->
<svg class="abs" style="left:1903px;top:99px" width="11" height="11"><path d="M5.5 0.5L10.5 10.5H0.5Z" fill="#0033a0"/></svg>
<svg class="abs" style="left:1903px;top:1102px" width="11" height="11"><path d="M5.5 10.5L10.5 0.5H0.5Z" fill="#0033a0"/></svg>
<div class="thumb" style="left:1903.5px;top:226px;width:10px;height:127px"></div>

<!-- replay panel -->
<div class="abs" style="left:1609px;top:99px;width:281px;height:1010px;border-radius:14px 14px 8px 8px;overflow:hidden;background:#f8fcfe;border-right:1px solid #dcdcdc">
  <div class="abs" style="left:0;top:0;width:281px;height:32px;background:#16772b"></div>
  <div class="abs" style="left:0;top:32px;width:281px;height:32px;background:#efefef"></div>
  <div class="abs" style="left:0;top:64px;width:279px;height:29px;background:#fff"></div>
  <div class="abs" style="left:123px;top:64px;width:1px;height:29px;background:#e4e4e4"></div>
  <div class="abs" style="left:0;top:963px;width:281px;height:47px;background:#efefef"></div>
</div>
<svg class="abs" style="left:1609px;top:98.6px" width="36" height="30" viewBox="0 0 36 30">
  <path d="M11.8 5.2 Q12.6 3.4 14.4 4.4 Q17.6 6.4 18.6 10.2 L20 11.6 L23.4 12.2 L19.6 13 Q17.4 14.4 14 13.8 Q11 13.2 9.8 11.2 Q12.6 11.6 14.2 10.8 Q13.2 8.4 11.8 5.2 Z" fill="#fff"/>
  <path d="M20 12.6 L28.6 11.4 M25.4 11.9 L27.6 10.2" stroke="#a8cca8" stroke-width="0.7" fill="none"/>
  <text x="4.4" y="24.6" font-family="Liberation Serif" font-weight="bold" font-size="14" fill="#fff" textLength="25.6" lengthAdjust="spacingAndGlyphs">GDA</text>
</svg>
<div class="menu" style="left:1652px;top:99px;height:32px;line-height:32px">GDA Operation Replay</div>
<div class="abs" style="left:1857px;top:105px;width:21px;height:20px;background:#9fa67a;border:1.5px solid #e8eef0">
 <svg class="abs" style="left:1px;top:1px" width="16" height="16"><path d="M3 3L14 14M14 3L3 14" stroke="#fff" stroke-width="1.8"/></svg></div>
<div class="tl" style="left:1616px;top:167.5px;color:#222;-webkit-text-stroke:0">type</div>
<div class="tl" style="left:1741px;top:167.5px;color:#222;-webkit-text-stroke:0">content</div>
<svg class="abs" style="left:1700px;top:137px" width="100" height="24">
 <circle cx="19" cy="12" r="11.6" fill="none" stroke="#9ee6e8" stroke-opacity="0.55" stroke-width="1.4"/>
 <circle cx="19" cy="12" r="9.2" fill="#fff" stroke="#86c440" stroke-width="4"/><circle cx="19" cy="12" r="3.5" fill="#86c440"/>
 <circle cx="49" cy="12" r="9.2" fill="#fff" stroke="#86c440" stroke-width="4"/>
 <circle cx="79" cy="12" r="9.2" fill="#fff" stroke="#86c440" stroke-width="4"/>
</svg>
<svg class="abs" style="left:1610px;top:1067px" width="11" height="11"><path d="M0.5 5.5L10.5 0.5V10.5Z" fill="#0033a0"/></svg>
<svg class="abs" style="left:1878px;top:1067px" width="11" height="11"><path d="M10.5 5.5L0.5 0.5V10.5Z" fill="#0033a0"/></svg>
<div class="thumb" style="left:1631px;top:1068px;width:211px;height:10px"></div>

<!-- status icon -->
<svg class="abs" style="left:342.5px;top:1115px" width="22" height="22" viewBox="0 0 22 22"><line x1="7.44" y1="10.50" x2="1.89" y2="9.72" stroke="#f400f2" stroke-width="3" stroke-linecap="round"/><line x1="8.16" y1="8.78" x2="3.75" y2="5.34" stroke="#f60aea" stroke-width="3" stroke-linecap="round"/><line x1="9.65" y1="7.66" x2="7.55" y2="2.47" stroke="#f818e0" stroke-width="3" stroke-linecap="round"/><line x1="11.50" y1="7.44" x2="12.28" y2="1.89" stroke="#fa28d4" stroke-width="3" stroke-linecap="round"/><line x1="13.22" y1="8.16" x2="16.66" y2="3.75" stroke="#fc3ac6" stroke-width="3" stroke-linecap="round"/><line x1="14.34" y1="9.65" x2="19.53" y2="7.55" stroke="#fd4cb8" stroke-width="3" stroke-linecap="round"/><line x1="14.56" y1="11.50" x2="20.11" y2="12.28" stroke="#fe5aae" stroke-width="3" stroke-linecap="round"/><line x1="13.84" y1="13.22" x2="18.25" y2="16.66" stroke="#ff66a6" stroke-width="3" stroke-linecap="round"/><line x1="12.35" y1="14.34" x2="14.45" y2="19.53" stroke="#ff789c" stroke-width="3" stroke-linecap="round"/><line x1="10.50" y1="14.56" x2="9.72" y2="20.11" stroke="#ff8a90" stroke-width="3" stroke-linecap="round"/><line x1="8.78" y1="13.84" x2="5.34" y2="18.25" stroke="#ffa070" stroke-width="3" stroke-linecap="round"/><line x1="7.66" y1="12.35" x2="2.47" y2="14.45" stroke="#ffa060" stroke-width="3" stroke-linecap="round"/></svg>
</body></html>
